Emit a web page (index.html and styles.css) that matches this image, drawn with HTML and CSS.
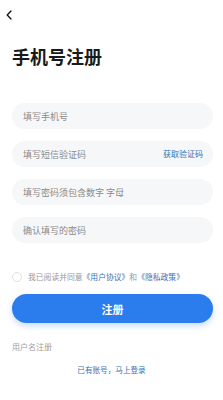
FILE: index.html
```html
<!DOCTYPE html>
<html lang="zh">
<head>
<meta charset="utf-8">
<link rel="stylesheet" href="styles.css">
</head>
<body>
<div class="page">
  <div class="topbar">
    <svg class="back" width="6" height="10" viewBox="0 0 6 10"><path d="M5 1 L1.2 5 L5 9" fill="none" stroke="#111" stroke-width="1.3" stroke-linecap="round" stroke-linejoin="round"/></svg>
  </div>
  <h1 class="title">手机号注册</h1>
  <div class="form">
    <div class="field"><span class="ph">填写手机号</span></div>
    <div class="field"><span class="ph">填写短信验证码</span><span class="code">获取验证码</span></div>
    <div class="field"><span class="ph">填写密码须包含数字 字母</span></div>
    <div class="field"><span class="ph">确认填写的密码</span></div>
  </div>
  <div class="agree">
    <span class="radio"></span>
    <span class="agree-text">我已阅读并同意<span class="link">《用户协议》</span>和<span class="link">《隐私政策》</span></span>
  </div>
  <div class="btn">注册</div>
  <div class="alt">用户名注册</div>
  <div class="login">已有账号，马上登录</div>
</div>
</body>
</html>
```
FILE: styles.css
```css
* { box-sizing: border-box; margin: 0; padding: 0; }
html, body { background: #fff; }
body {
  font-family: "Noto Sans CJK SC", "Noto Sans", sans-serif;
  width: 223px;
  height: 400px;
  overflow: hidden;
}
.page { display: flex; flex-direction: column; }
.topbar { height: 30px; padding: 10px 0 0 6px; }
.back { display: block; }
.title {
  margin: 14px 0 0 12px;
  font-size: 18px;
  line-height: 24px;
  font-weight: 700;
  color: #1a1a1a;
}
.form {
  margin: 35px 10px 0 12px;
  display: flex;
  flex-direction: column;
  gap: 12px;
}
.field {
  height: 26px;
  border-radius: 13px;
  background: #f6f7f9;
  display: flex;
  align-items: center;
  justify-content: space-between;
  padding: 0 10px 0 11px;
}
.ph { font-size: 9px; color: #8a8a8a; line-height: 1; }
.code { font-size: 8px; color: #3a6fb3; line-height: 1; }
.agree {
  margin: 29px 0 0 12px;
  display: flex;
  align-items: center;
  gap: 6px;
  height: 10px;
}
.radio {
  width: 10px; height: 10px;
  border-radius: 50%;
  border: 1px solid #e2e2e2;
}
.agree-text { font-size: 7.8px; color: #999; line-height: 1; }
.link { color: #3a6fb3; }
.btn {
  margin: 12px 10px 0 12px;
  height: 29px;
  border-radius: 15px;
  background: #2b7cec;
  color: #fff;
  font-size: 11px;
  font-weight: 700;
  display: flex;
  align-items: center;
  justify-content: center;
  box-shadow: 0 3px 6px rgba(43, 124, 236, 0.25);
}
.alt {
  margin: 19px 0 0 12px;
  font-size: 8px;
  color: #a0a0a0;
  line-height: 10px;
}
.login {
  margin-top: 13px;
  text-align: center;
  font-size: 7.6px;
  color: #3a6fb3;
  line-height: 10px;
}
```
